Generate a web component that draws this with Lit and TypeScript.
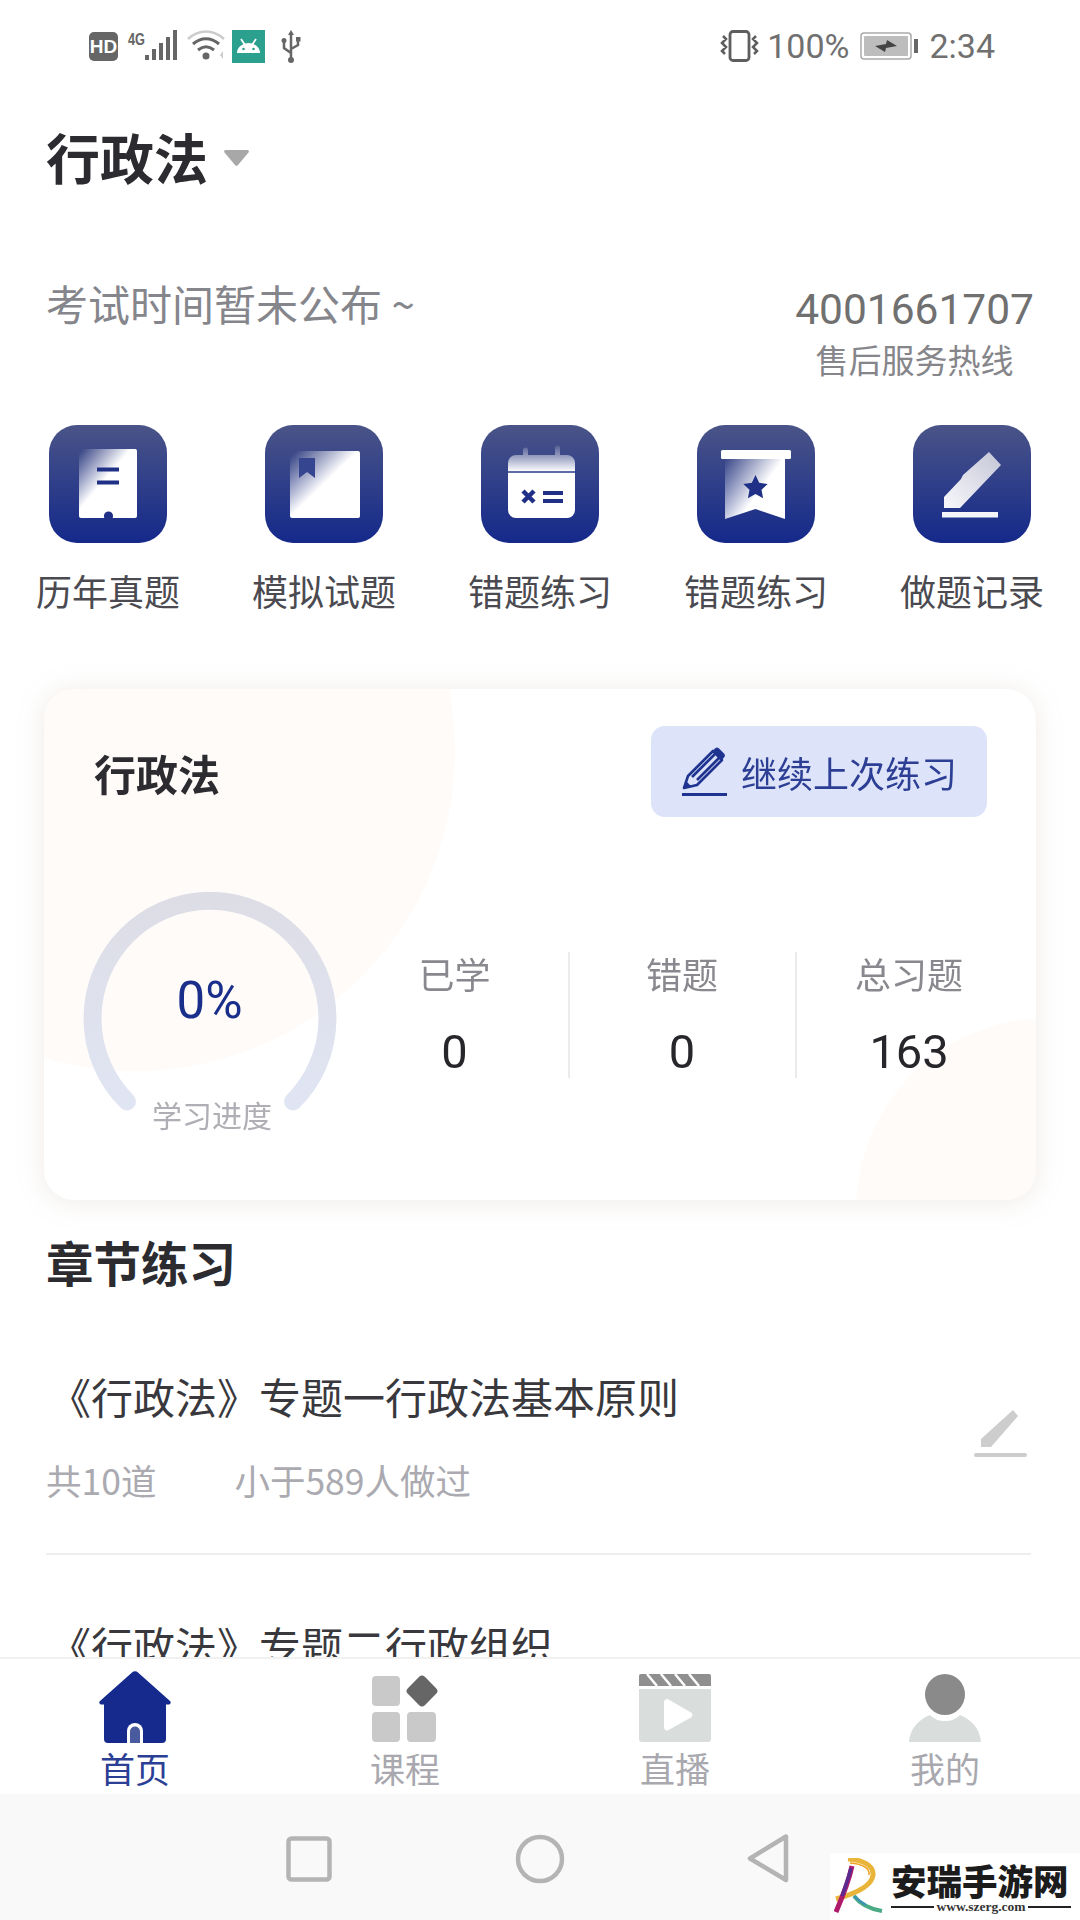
import { LitElement, html, css, svg } from "lit";
import { customElement } from "lit/decorators.js";

const NAVY = "#1f3086";

const shortcuts = [
  { label: "历年真题", art: svg`
    <defs><linearGradient id="g1" gradientUnits="userSpaceOnUse" x1="32" y1="26" x2="60" y2="50"><stop offset="0" stop-color="#fff" stop-opacity="0"/><stop offset="1" stop-color="#fff"/></linearGradient></defs>
    <path d="M30 24H86a2 2 0 0 1 2 2V91a2 2 0 0 1-2 2H32a2 2 0 0 1-2-2Z" fill="url(#g1)"/>
    <circle cx="59.5" cy="91" r="4.6" fill="${NAVY}"/>
    <path d="M48 44.500H70M48 57.500H70" stroke="${NAVY}" stroke-width="4"/>` },
  { label: "模拟试题", art: svg`
    <defs><linearGradient id="g2" gradientUnits="userSpaceOnUse" x1="28" y1="29" x2="58" y2="60"><stop offset="0" stop-color="#fff" stop-opacity="0"/><stop offset="1" stop-color="#fff"/></linearGradient></defs>
    <rect x="25" y="26" width="70" height="67" rx="2" fill="url(#g2)"/>
    <path d="M34 33H50V53L42 47L34 53Z" fill="#35458f"/>` },
  { label: "错题练习", art: svg`
    <defs><linearGradient id="g3" x1="0" y1="0" x2="0" y2="1"><stop offset="0" stop-color="#fff" stop-opacity=".1"/><stop offset=".36" stop-color="#fff"/></linearGradient></defs>
    <path d="M27 38a8 8 0 0 1 8-8h7v-5a2.500 2.500 0 0 1 5 0v5h27v-7a2.500 2.500 0 0 1 5 0v7h7a8 8 0 0 1 8 8v47a8 8 0 0 1-8 8H35a8 8 0 0 1-8-8Z" fill="url(#g3)"/>
    <path d="M27 47H95" stroke="#2a3a88" stroke-width="1.500"/>
    <path d="M42 66l11 11M53 66l-11 11" stroke="${NAVY}" stroke-width="4.500"/>
    <path d="M62 68H82M62 76H82" stroke="${NAVY}" stroke-width="4"/>` },
  { label: "错题练习", art: svg`
    <defs><linearGradient id="g4" gradientUnits="userSpaceOnUse" x1="28" y1="34" x2="66" y2="62"><stop offset="0" stop-color="#fff" stop-opacity="0"/><stop offset="1" stop-color="#fff"/></linearGradient></defs>
    <rect x="24" y="25" width="70" height="9" rx="1.500" fill="#fff"/>
    <path d="M28 34H88V94L58.500 84L28 94Z" fill="url(#g4)"/>
    <path d="M58.500 50l3.700 7.800 8.500 1.100-6.200 5.900 1.600 8.400-7.600-4.100-7.600 4.100 1.600-8.400-6.200-5.900 8.500-1.100Z" fill="${NAVY}"/>` },
  { label: "做题记录", art: svg`
    <defs><linearGradient id="g5" gradientUnits="userSpaceOnUse" x1="88" y1="27" x2="35" y2="83"><stop offset="0" stop-color="#c4c6d6"/><stop offset="1" stop-color="#f6f6fa"/></linearGradient></defs>
    <path d="M76 27L88 40L47 83H31V72L48 54L50 50L76 27Z" fill="url(#g5)"/>
    <rect x="29" y="87" width="56" height="5.500" fill="#f4f5fa"/>` },
];

const stats = [
  { label: "已学", value: "0" },
  { label: "错题", value: "0" },
  { label: "总习题", value: "163" },
];

const tabs = [
  { label: "首页", active: true, art: svg`
    <path d="M33 1.500a4 4 0 0 1 6 0L71 30a2 2 0 0 1-1.500 3.500H67V68a4 4 0 0 1-4 4H9a4 4 0 0 1-4-4V33.500H2.500A2 2 0 0 1 1 30Z" fill="#152a8c"/>
    <path d="M28 72V60a8 8 0 0 1 16 0V72Z" fill="#fff"/>
    <path d="M31 72V60.500a5 5 0 0 1 10 0V72Z" fill="#4a5a9f"/>` },
  { label: "课程", active: false, art: svg`
    <rect x="3" y="5" width="28" height="30" rx="4" fill="#c9c9c9"/>
    <rect x="41" y="8" width="24" height="24" rx="4" fill="#666" transform="rotate(45 53 20)"/>
    <rect x="3" y="41" width="28" height="30" rx="4" fill="#c9c9c9"/>
    <rect x="38" y="41" width="29" height="30" rx="4" fill="#c9c9c9"/>` },
  { label: "直播", active: false, art: svg`
    <path d="M2 3H70a2 2 0 0 1 2 2V15H0V5a2 2 0 0 1 2-2Z" fill="#8f8f8f"/>
    <path d="M8 3L18 15M22 3L32 15M36 3L46 15M50 3L60 15" stroke="#fff" stroke-width="2.500"/>
    <path d="M0 18H72V68a3 3 0 0 1-3 3H3a3 3 0 0 1-3-3Z" fill="#d9dddc"/>
    <path d="M25 31a3 3 0 0 1 4.500-2.500L52 41.500a3 3 0 0 1 0 5L29.500 59A3 3 0 0 1 25 56.500Z" fill="#fff"/>` },
  { label: "我的", active: false, art: svg`
    <ellipse cx="36" cy="23.500" rx="20" ry="20.500" fill="#8a8a8a"/>
    <path d="M0 71C1 58 9 49 21 44C26 49 31 50 36 50C41 50 46 49 51 44C63 49 71 58 72 71Z" fill="#d9dddc"/>` },
];

@customElement("app-root")
export class AppRoot extends LitElement {
  static styles = css`
    :host {
      display: flex;
      flex-direction: column;
      width: 1080px;
      height: 1920px;
      overflow: hidden;
      position: relative;
      background: #fff;
      font-family: "Noto Sans CJK SC", "Noto Sans", sans-serif;
      color: #2b2b30;
    }
    svg { display: block; flex: none; }
    .status {
      flex: none;
      height: 92px;
      box-sizing: border-box;
      padding: 29px 85px 0 89px;
      display: flex;
      justify-content: space-between;
      align-items: flex-start;
    }
    .status-right {
      display: flex;
      align-items: center;
      height: 34px;
      font: 34px/34px Roboto, sans-serif;
      color: #707070;
    }
    .pct { margin: 0 11px 0 8px; }
    .clock { margin-left: 11px; }
    main { flex: 1; min-height: 0; overflow: hidden; }
    .title-row {
      display: flex;
      align-items: center;
      padding: 35px 46px 0;
      height: 60px;
      font-size: 54px;
      line-height: 60px;
      font-weight: 700;
      box-sizing: content-box;
    }
    .caret { margin-left: 16px; margin-top: 2px; }
    .info {
      display: flex;
      justify-content: space-between;
      align-items: flex-start;
      padding: 91px 46px 0 46px;
    }
    .exam { font-size: 42px; line-height: 50px; color: #85858c; }
    .hot { padding-top: 7px; text-align: center; }
    .phone { font: 42.500px/50px Roboto, sans-serif; color: #707070; }
    .hot-label { font-size: 33px; line-height: 40px; margin-top: 4px; color: #85858a; }
    .shortcuts { display: grid; grid-template-columns: repeat(5, 216px); margin-top: 46px; }
    .shortcut { display: flex; flex-direction: column; align-items: center; }
    .tile {
      width: 118px;
      height: 118px;
      border-radius: 28px;
      background: linear-gradient(180deg, #4a5488 0%, #14298a 100%);
    }
    .shortcut-label { margin-top: 27px; font-size: 36px; line-height: 40px; color: #4a4a50; }
    .card-wrap { filter: drop-shadow(0 2px 14px rgba(120, 100, 70, .13)); }
    .card {
      position: relative;
      overflow: hidden;
      margin: 79px 44px 0;
      height: 511px;
      border-radius: 30px;
      background: #fff;
    }
    .blob { position: absolute; border-radius: 50%; background: #fefbf8; }
    .blob-a { left: -229px; top: -258px; width: 640px; height: 640px; }
    .blob-b { right: -204px; bottom: -202px; width: 384px; height: 384px; }
    .card-head {
      position: relative;
      display: flex;
      align-items: center;
      justify-content: space-between;
      padding: 37px 49px 0 50px;
    }
    .card-title { font-size: 42px; line-height: 50px; font-weight: 700; margin-top: 3px; }
    .btn {
      display: flex;
      align-items: center;
      width: 336px;
      height: 91px;
      box-sizing: border-box;
      padding-left: 31px;
      gap: 13px;
      border-radius: 14px;
      background: #dde3f9;
      color: #2c3f94;
      font-size: 36px;
    }
    .card-body {
      position: relative;
      display: flex;
      align-items: flex-start;
      margin-top: 75px;
      padding-left: 39px;
    }
    .gauge { position: relative; width: 258px; height: 237px; flex: none; }
    .pct-big {
      position: absolute;
      left: 0;
      width: 253px;
      top: 84px;
      text-align: center;
      font: 51px/50px Roboto, sans-serif;
      color: #1a2f8c;
    }
    .gauge-label {
      position: absolute;
      left: 0;
      width: 258px;
      top: 205px;
      text-align: center;
      font-size: 30px;
      line-height: 34px;
      color: #aeaeb4;
    }
    .stats { display: grid; grid-template-columns: repeat(3, 228px); margin-top: 60px; height: 126px; }
    .stat { text-align: center; border-right: 2px solid #ebebeb; box-sizing: border-box; }
    .stat:first-child { width: 229px; }
    .stat:last-child { border-right: none; padding-right: 4px; }
    .stat-label { font-size: 36px; line-height: 40px; margin-top: 1px; color: #88888e; }
    .stat-value { font: 47px/50px Roboto, sans-serif; margin-top: 34px; color: #26262b; }
    .section { font-size: 47.500px; line-height: 56px; font-weight: 700; margin: 34px 46px 0; }
    .rows { margin: 81px 49px 0 46px; }
    .row {
      display: flex;
      justify-content: space-between;
      align-items: flex-start;
      padding-bottom: 51px;
      border-bottom: 2px solid #eeeeee;
    }
    .row-title { font-size: 42px; line-height: 50px; margin-left: 3px; color: #38383d; }
    .row-meta { display: flex; gap: 78px; margin-top: 37px; font-size: 35.500px; line-height: 44px; color: #aaaab0; }
    .row-icon { margin-top: 39px; margin-right: 4px; }
    .row2 { margin-top: 65px; }
    .tabbar {
      flex: none;
      display: grid;
      grid-template-columns: repeat(4, 270px);
      height: 137px;
      box-sizing: border-box;
      border-top: 2px solid #f1f1f1;
      padding-top: 12px;
      background: #fff;
    }
    .tab { display: flex; flex-direction: column; align-items: center; }
    .tab-label { margin-top: 5px; font-size: 35px; line-height: 40px; color: #a8a8ae; }
    .tab-label.on { color: #2b3f95; }
    .nav {
      flex: none;
      position: relative;
      height: 126px;
      background: #f9f9f9;
    }
    .nav-keys { position: absolute; left: 279px; top: 35px; }
    .mark {
      position: absolute;
      right: 0;
      bottom: 0;
      width: 250px;
      height: 67px;
      background: #fff;
      display: flex;
      align-items: flex-start;
      box-sizing: border-box;
      padding: 5px 0 0 4px;
      gap: 7px;
    }
    .mark-name {
      font-size: 35.500px;
      line-height: 38px;
      font-weight: 900;
      margin-top: 3px;
      color: #1c1c1c;
      white-space: nowrap;
    }
    .mark-url {
      display: flex;
      align-items: center;
      gap: 2px;
      width: 180px;
      margin-top: 1px;
      font: bold 13.500px/14px "Liberation Serif", serif;
      color: #333;
    }
    .mark-url i { flex: 1; height: 2px; background: #222; }
  `;

  render() {
    return html`
      <div class="status">
        <svg width="212" height="36" viewBox="0 0 212 36">
          <rect x="0" y="3" width="29" height="29" rx="5" fill="#666"/>
          <text x="14.500" y="24" text-anchor="middle" font-family="Liberation Sans" font-size="19" font-weight="700" fill="#fff">HD</text>
          <text x="39" y="16" font-family="Liberation Sans" font-size="16" font-weight="700" fill="#666" textLength="17" lengthAdjust="spacingAndGlyphs">4G</text>
          <g fill="#666">
            <rect x="56" y="26" width="4" height="5"/><rect x="63" y="20" width="4" height="11"/>
            <rect x="70" y="14" width="4" height="17"/><rect x="77" y="8" width="4" height="23"/><rect x="84" y="1" width="4" height="30"/>
          </g>
          <path d="M99 10C110 0 124 0 135 10" fill="none" stroke="#ccc" stroke-width="2.500"/>
          <path d="M104 15C112 8 122 8 130 15M109 21C114 17 120 17 125 21" fill="none" stroke="#666" stroke-width="3"/>
          <circle cx="117" cy="27" r="3.500" fill="#666"/>
          <path d="M134 22l-3 4 3 4zM131 22v8" fill="#ccc"/>
          <rect x="143" y="1" width="33" height="33" fill="#2ba08f"/>
          <path d="M148 24a11.500 10 0 0 1 23 0Z" fill="#fff"/>
          <path d="M152 10l4 6M167 10l-4 6" stroke="#fff" stroke-width="1.800"/>
          <circle cx="154.500" cy="20" r="1.300" fill="#2ba08f"/><circle cx="164.500" cy="20" r="1.300" fill="#2ba08f"/>
          <path d="M202 4V31M202 24L195 19V13M202 20L209 16V11" fill="none" stroke="#666" stroke-width="2.500"/>
          <path d="M202 1l3 5h-6z" fill="#666"/>
          <circle cx="195" cy="11.500" r="2.500" fill="#666"/><rect x="207" y="8" width="4.500" height="4.500" fill="#666"/><circle cx="202" cy="31" r="3" fill="#666"/>
        </svg>
        <div class="status-right">
          <svg width="39" height="32" viewBox="0 0 39 32">
            <rect x="10" y="1.500" width="19" height="29" rx="3" fill="none" stroke="#5e5e5e" stroke-width="2.800"/>
            <path d="M3 6l3 3-4 4 4 4-4 4 3 3M36 6l-3 3 4 4-4 4 4 4-3 3" fill="none" stroke="#5e5e5e" stroke-width="2.500"/>
          </svg>
          <span class="pct">100%</span>
          <svg width="58" height="28" viewBox="0 0 58 28">
            <rect x="1" y="1" width="50" height="26" rx="3" fill="none" stroke="#aaa" stroke-width="1.500"/>
            <rect x="4" y="4" width="44" height="20" rx="1" fill="#bdbdbd"/>
            <rect x="54" y="7" width="4" height="14" fill="#666"/>
            <path d="M15 14L26 12L27 8L37 14L26 16L25 20Z" fill="#444"/>
          </svg>
          <span class="clock">2:34</span>
        </div>
      </div>
      <main>
        <div class="title-row">
          <span>行政法</span>
          <svg class="caret" width="25" height="16" viewBox="0 0 25 16"><path d="M1.500 0H23.500a1.500 1.500 0 0 1 1 2.500L14 15a2 2 0 0 1-3 0L.5 2.500A1.500 1.500 0 0 1 1.500 0Z" fill="#a8a8a8"/></svg>
        </div>
        <div class="info">
          <div class="exam">考试时间暂未公布 ~</div>
          <div class="hot">
            <div class="phone">4001661707</div>
            <div class="hot-label">售后服务热线</div>
          </div>
        </div>
        <div class="shortcuts">
          ${shortcuts.map(s => html`
            <div class="shortcut">
              <div class="tile"><svg width="118" height="118" viewBox="0 0 118 118">${s.art}</svg></div>
              <div class="shortcut-label">${s.label}</div>
            </div>`)}
        </div>
        <div class="card-wrap">
          <div class="card">
            <div class="blob blob-a"></div>
            <div class="blob blob-b"></div>
            <div class="card-head">
              <div class="card-title">行政法</div>
              <div class="btn">
                <svg width="46" height="50" viewBox="0 0 46 50">
                  <path d="M2 41L6 29L31 4L40 13L15 38Z" fill="#dde3f9" stroke="#1f3390" stroke-width="2.600" stroke-linejoin="round"/>
                  <path d="M10 30L33 7M15 33L37 11" stroke="#1f3390" stroke-width="2.600"/>
                  <path d="M33 1.500a3 3 0 0 1 4 0L42 6.500a3 3 0 0 1 0 4L39 13.500L30 4.500Z" fill="#1f3390"/>
                  <path d="M2 41L4 34L9 39Z" fill="#1f3390"/>
                  <rect x="0" y="46" width="45" height="3" fill="#1f3390"/>
                </svg>
                <span>继续上次练习</span>
              </div>
            </div>
            <div class="card-body">
              <div class="gauge">
                <svg width="258" height="237" viewBox="0 0 258 237">
                  <defs><linearGradient id="ring" x1="0" y1="0" x2="0" y2="1"><stop offset="0" stop-color="#dddde6"/><stop offset="1" stop-color="#e0e5f3"/></linearGradient></defs>
                  <path d="M44 209.500A117.500 117.500 0 1 1 210 209.500" fill="none" stroke="url(#ring)" stroke-width="18" stroke-linecap="round"/>
                </svg>
                <div class="pct-big">0%</div>
                <div class="gauge-label">学习进度</div>
              </div>
              <div class="stats">
                ${stats.map(s => html`
                  <div class="stat">
                    <div class="stat-label">${s.label}</div>
                    <div class="stat-value">${s.value}</div>
                  </div>`)}
              </div>
            </div>
          </div>
        </div>
        <div class="section">章节练习</div>
        <div class="rows">
          <div class="row">
            <div>
              <div class="row-title">《行政法》专题一行政法基本原则</div>
              <div class="row-meta"><span>共10道</span><span>小于589人做过</span></div>
            </div>
            <svg class="row-icon" width="53" height="47" viewBox="0 0 53 47">
              <path d="M39 0L44 6L17 37H7V29Z" fill="#cdcdcd"/>
              <rect x="0" y="43" width="53" height="4" rx="2" fill="#cdcdcd"/>
            </svg>
          </div>
          <div class="row-title row2">《行政法》专题二行政组织</div>
        </div>
      </main>
      <div class="tabbar">
        ${tabs.map(t => html`
          <div class="tab">
            <svg width="72" height="72" viewBox="0 0 72 72">${t.art}</svg>
            <div class="tab-label ${t.active ? "on" : ""}">${t.label}</div>
          </div>`)}
      </div>
      <div class="nav">
        <svg class="nav-keys" width="520" height="60" viewBox="0 0 520 60">
          <rect x="9.500" y="9.500" width="41" height="41" rx="3" fill="none" stroke="#b4b4b4" stroke-width="4.500"/>
          <circle cx="261" cy="30" r="22" fill="none" stroke="#b4b4b4" stroke-width="4.500"/>
          <path d="M507 7.500L471 29.500L507 51Z" fill="none" stroke="#b4b4b4" stroke-width="4.500" stroke-linejoin="round"/>
        </svg>
        <div class="mark">
          <svg width="50" height="57" viewBox="0 0 50 57">
            <path d="M14 1C30 2 40 8 39 17C38 28 20 36 2 41" fill="none" stroke="#e8b53a" stroke-width="5"/>
            <path d="M16 5C30 6 36 11 35 17" fill="none" stroke="#f0a020" stroke-width="1.500"/>
            <path d="M18 8C15 22 8 40 2 54" fill="none" stroke="#b01a6a" stroke-width="5"/>
            <path d="M17 10C14 22 11 30 8 38" fill="none" stroke="#5a2a90" stroke-width="3.500"/>
            <path d="M20 38C26 46 36 51 48 53" fill="none" stroke="#4bab84" stroke-width="4"/>
            <path d="M20 38C24 42 28 45 32 47" fill="none" stroke="#3a90b8" stroke-width="2"/>
          </svg>
          <div>
            <div class="mark-name">安瑞手游网</div>
            <div class="mark-url"><i></i><span>www.szerg.com</span><i></i></div>
          </div>
        </div>
      </div>
    `;
  }
}
